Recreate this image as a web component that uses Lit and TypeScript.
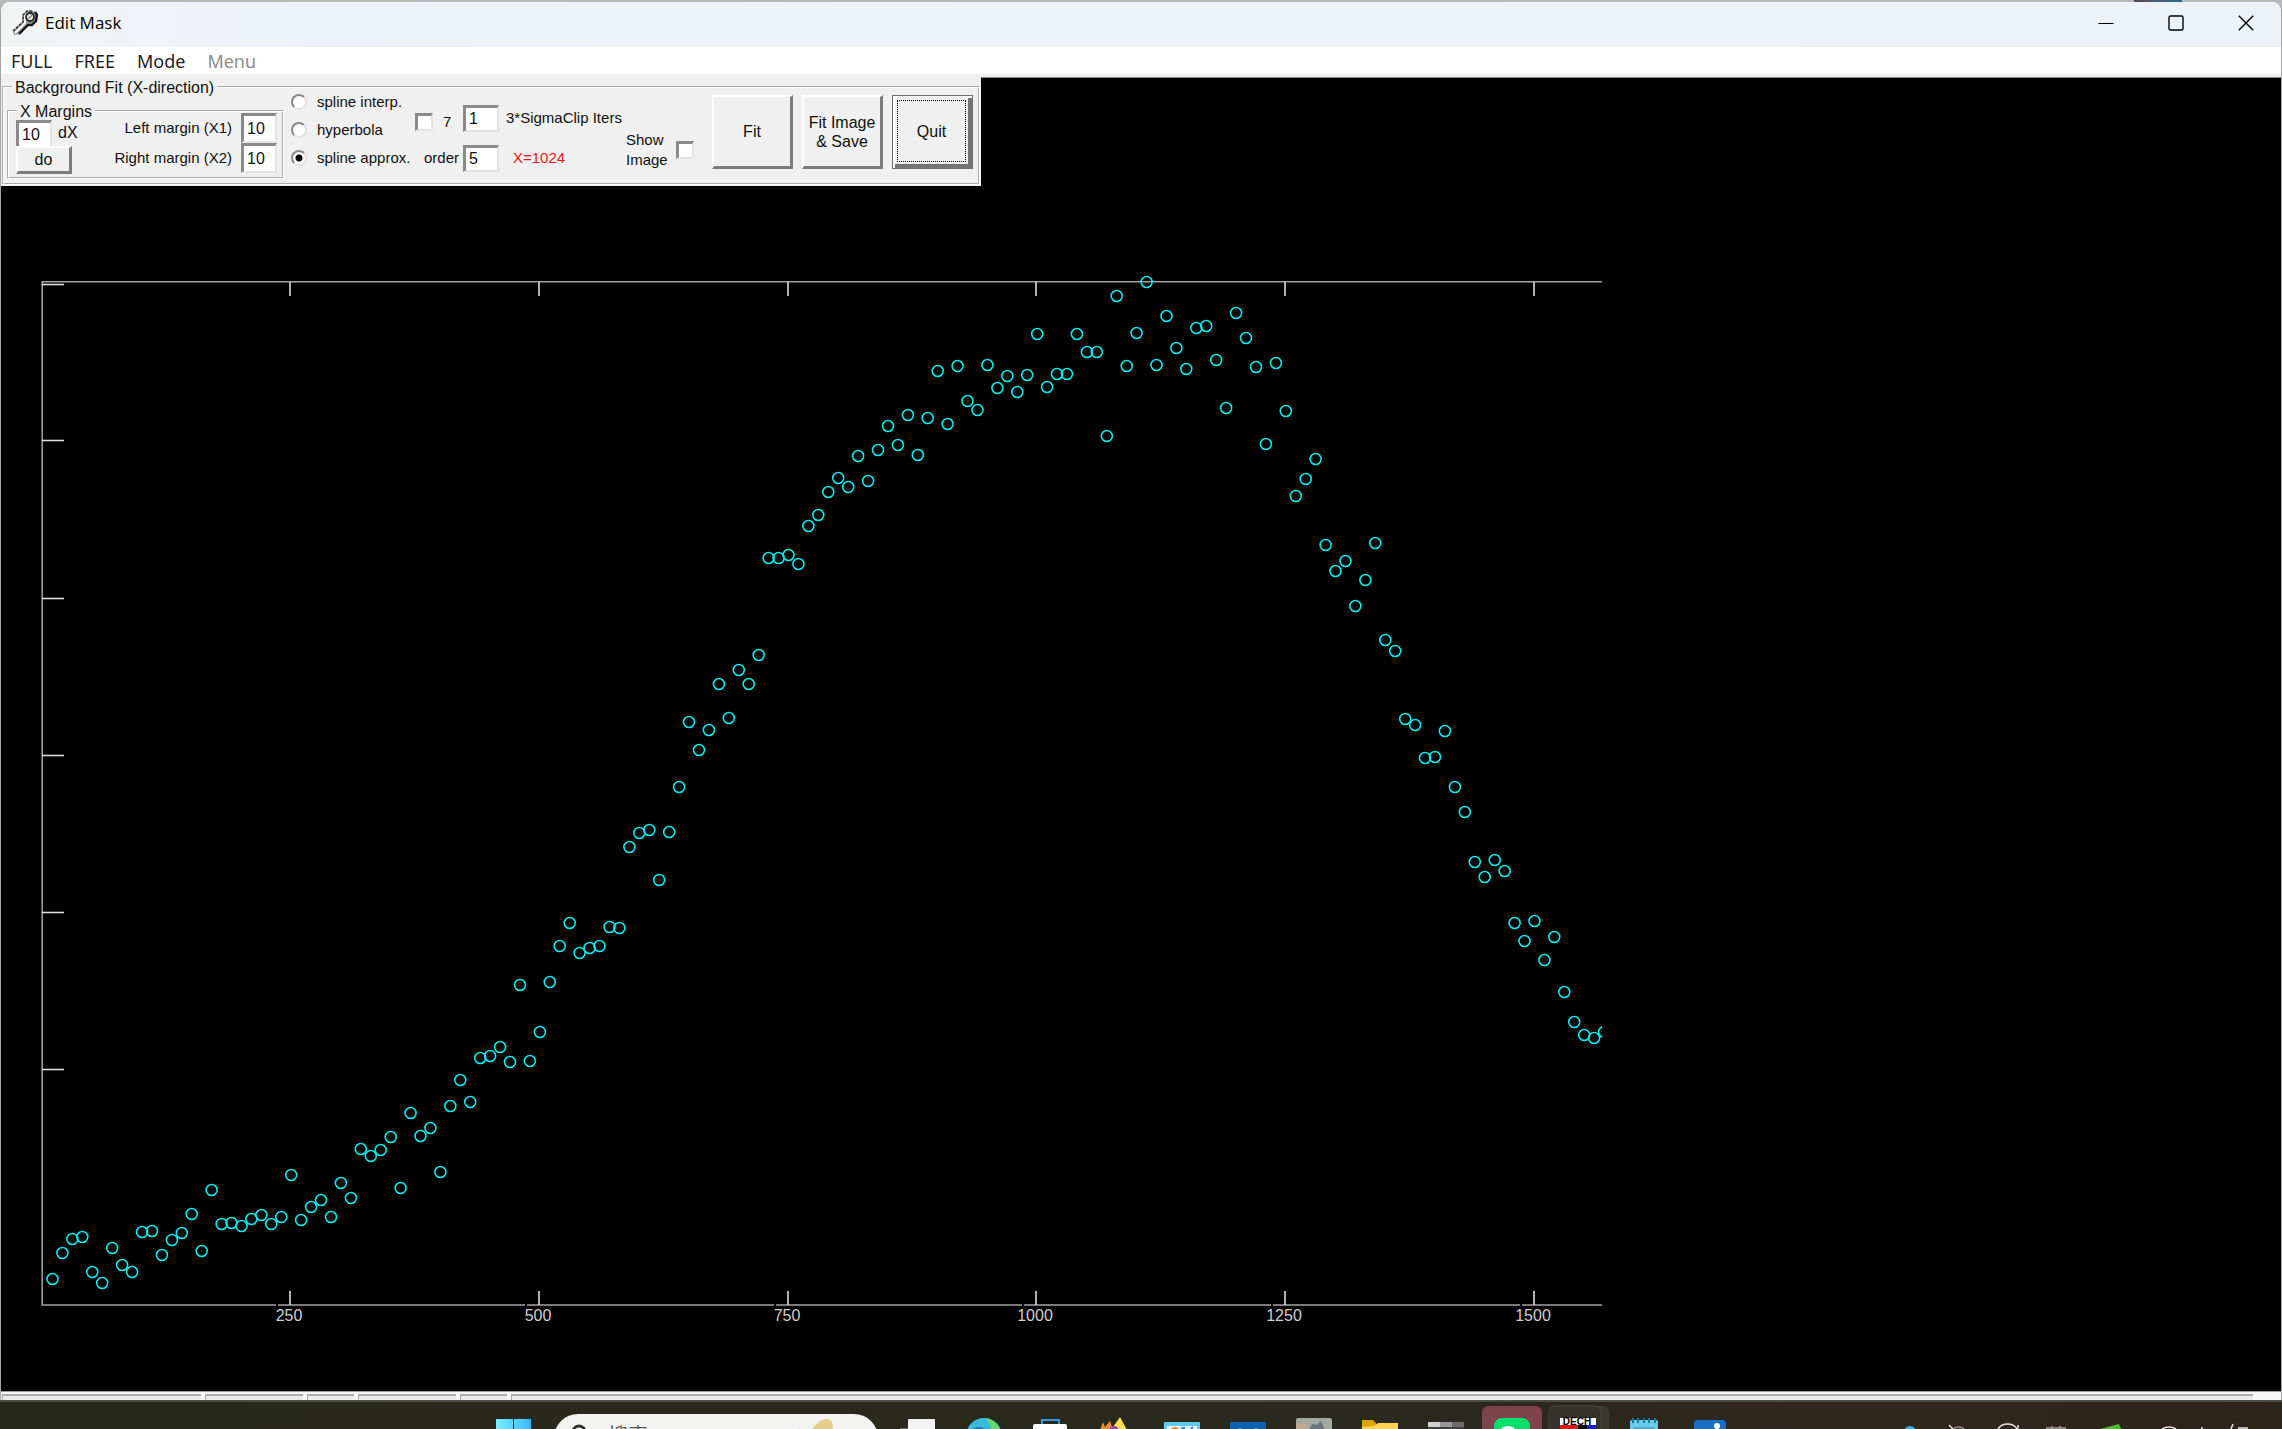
import { LitElement, html, svg, css } from "lit";
import { customElement } from "lit/decorators.js";

/** Background samples, one for every ten image columns (canvas y). */
const SAMPLES = [
  1279, 1253, 1239, 1237, 1272, 1283, 1248, 1265, 1272, 1232, 1231, 1255, 1240, 1233, 1214, 1251,
  1190, 1224, 1223, 1226, 1219, 1215, 1224, 1217, 1175, 1220, 1207, 1200, 1217, 1183, 1198, 1149,
  1156, 1150, 1137, 1188, 1113, 1136, 1128, 1172, 1106, 1080, 1102, 1058, 1056, 1047, 1062, 985,
  1061, 1032, 982, 946, 923, 953, 948, 946, 927, 928, 847, 833, 830, 880, 832, 787,
  722, 750, 730, 684, 718, 670, 684, 655, 558, 558, 555, 564, 526, 515, 492, 478,
  487, 456, 481, 450, 426, 445, 415, 455, 418, 371, 424, 366, 401, 410, 365, 388,
  376, 392, 375, 334, 387, 374, 374, 334, 352, 352, 436, 296, 366, 333, 282, 365,
  316, 348, 369, 328, 326, 360, 408, 313, 338, 367, 444, 363, 411, 496, 479, 459,
  545, 571, 561, 606, 580, 543, 640, 651, 719, 725, 758, 757, 731, 787, 812, 862,
  877, 860, 871, 923, 941, 921, 960, 937, 992, 1022, 1035, 1038, 1032,
];
const FIRST_X = 52.5;
const STEP_X = 9.946;

const X_TICKS = [
  { x: 290, label: "250" },
  { x: 539, label: "500" },
  { x: 788, label: "750" },
  { x: 1036, label: "1000" },
  { x: 1285, label: "1250" },
  { x: 1534, label: "1500" },
];
const Y_TICKS = [284, 440, 598, 755, 912, 1069];

@customElement("mask-plot")
export class MaskPlot extends LitElement {
  static styles = css`
    :host { display: block; background: #000; min-height: 0; }
    .canvas { display: block; width: 100%; height: 100%; }
    .axis { stroke: #a4a4a4; stroke-width: 1.5; fill: none; }
    .tick { stroke: #dedede; stroke-width: 1.6; }
    .gap { stroke: #000; stroke-width: 2; }
    .point { fill: none; stroke: #00ecec; stroke-width: 1.6; }
    .label { fill: #d0d0d0; font: 16px "Liberation Sans", Arial, sans-serif; text-anchor: middle; }
  `;

  render() {
    return html`
      <svg class="canvas" viewBox="1 186 2280 1205" preserveAspectRatio="xMinYMin meet" role="img" aria-label="Background profile">
        <defs><clipPath id="area"><rect x="30" y="200" width="1572" height="1120"></rect></clipPath></defs>
        <path class="axis" d="M1602 281.8H42.2V1305H1602"></path>
        ${Y_TICKS.map((y) => svg`<line class="tick" x1="42" x2="64" y1=${y + 0.5} y2=${y + 0.5}></line>`)}
        ${X_TICKS.map((t) => svg`
          <line class="tick" x1=${t.x} x2=${t.x} y1="282" y2="296"></line>
          <line class="tick" x1=${t.x} x2=${t.x} y1="1291" y2="1305"></line>
          <line class="gap" x1=${t.x - 14} x2=${t.x - 12} y1="1305" y2="1305"></line>
          <text class="label" x=${t.x - 1} y="1321">${t.label}</text>`)}
        <g clip-path="url(#area)">
          ${SAMPLES.map((y, i) => svg`<circle class="point" cx=${(FIRST_X + i * STEP_X).toFixed(1)} cy=${y} r="5.5"></circle>`)}
        </g>
      </svg>`;
  }
}

@customElement("fit-panel")
export class FitPanel extends LitElement {
  static styles = css`
    :host { display: flex; background: #f0f0f0; padding: 12px 1px 1px 1px; color: #111;
      font: 16px/20px "Liberation Sans", Arial, sans-serif; white-space: nowrap; }
    fieldset { box-sizing: border-box; margin: 0; padding: 0; border: 2px groove #fff; min-width: 0; display: flex; align-items: flex-start; }
    legend { height: 2px; line-height: 4px; padding: 0 3px; margin-left: 8px; }
    .outer { padding-right: 5px; height: 99px; }
    .margins { margin: 22px 0 0 3px; width: 277px; height: 69px; justify-content: space-between; }
    .step { display: grid; grid-template-columns: 36px auto; column-gap: 6px; padding: 8px 0 0 7px; }
    .step .field { height: 26px; border-bottom: 0; }
    .step .label { align-self: center; }
    .step .button { grid-column: 1 / 3; width: 56px; height: 28px; }
    .limits { display: grid; grid-template-columns: auto 36px; grid-auto-rows: 30px; column-gap: 9px; align-items: center; padding: 1px 5px 0 0; text-align: right; font-size: 15px; line-height: 24px; }
    .limits .field { height: 30px; font-size: 16px; }
    .field { box-sizing: border-box; width: 36px; height: 27px; margin: 0; padding: 0 0 0 3px; border-style: solid; border-width: 3px 2px 2px 3px;
      border-color: #8a8a8a #e4e4e4 #e4e4e4 #8a8a8a; background: #fff; color: #111; font: inherit; font-size: 16px; border-radius: 0; outline: none; }
    .button { box-sizing: border-box; margin: 0; padding: 0; border-style: solid; border-width: 2px 3px 3px 2px; border-color: #fff #7c7c7c #7c7c7c #fff;
      background: #f0f0f0; color: #111; font: inherit; line-height: 19px; }
    .kinds { width: 122px; margin-left: 7px; display: flex; flex-direction: column; font-size: 15px; }
    .kind { height: 28px; display: flex; align-items: center; gap: 10px; }
    .radio { appearance: none; box-sizing: border-box; flex: none; width: 16px; height: 16px; margin: 0; border: 2px solid; border-radius: 50%;
      border-color: #8a8a8a #e4e4e4 #e4e4e4 #8a8a8a; background: #fff; }
    .radio:checked { background: radial-gradient(circle, #000 3px, #fff 4px); }
    .check { appearance: none; box-sizing: border-box; flex: none; width: 18px; height: 18px; margin: 0; border-style: solid; border-width: 3px 2px 2px 3px;
      border-color: #8a8a8a #e4e4e4 #e4e4e4 #8a8a8a; background: #fff; }
    .options { width: 50px; padding-top: 16px; display: flex; flex-direction: column; font-size: 15px; }
    .option { height: 36px; display: flex; align-items: center; }
    .clip { padding-left: 2px; gap: 10px; }
    .order { justify-content: flex-end; padding-right: 4px; }
    .values { width: 163px; padding-top: 10px; font-size: 15px; }
    .value { height: 40px; display: flex; align-items: center; gap: 7px; }
    .size { color: #f81414; padding-left: 7px; }
    .show { padding-top: 42px; width: 68px; display: flex; align-items: center; justify-content: space-between; font-size: 15px; }
    .actions { display: flex; gap: 9px; padding: 7px 0 0 18px; }
    .action { width: 81px; height: 74px; }
    .default { border: 1px solid #6c6c6c; padding: 0 2px 2px 0; box-shadow: inset 2px 2px 0 #fff, inset -4px -4px 0 #747474; }
    .focus { display: flex; align-items: center; justify-content: center; box-sizing: border-box; width: 69px; height: 62px; margin: 0 auto; border: 1px dotted #000; }
  `;

  render() {
    return html`
      <fieldset class="outer">
        <legend>Background Fit (X-direction)</legend>
        <fieldset class="margins">
          <legend>X Margins</legend>
          <div class="step">
            <input class="field" id="dx" value="10" /><label class="label" for="dx">dX</label>
            <button class="button">do</button>
          </div>
          <div class="limits">
            <label for="x1">Left margin (X1)</label><input class="field" id="x1" value="10" />
            <label for="x2">Right margin (X2)</label><input class="field" id="x2" value="10" />
          </div>
        </fieldset>
        <div class="kinds">
          <label class="kind"><input class="radio" type="radio" name="kind" />spline interp.</label>
          <label class="kind"><input class="radio" type="radio" name="kind" />hyperbola</label>
          <label class="kind"><input class="radio" type="radio" name="kind" checked />spline approx.</label>
        </div>
        <div class="options">
          <label class="option clip"><input class="check" type="checkbox" />7</label>
          <label class="option order" for="order">order</label>
        </div>
        <div class="values">
          <div class="value"><input class="field" id="iters" value="1" /><label for="iters">3*SigmaClip Iters</label></div>
          <div class="value"><input class="field" id="order" value="5" /><span class="size">X=1024</span></div>
        </div>
        <label class="show"><span>Show<br />Image</span><input class="check" type="checkbox" /></label>
        <div class="actions">
          <button class="button action">Fit</button>
          <button class="button action">Fit Image<br />&amp; Save</button>
          <button class="button action default"><span class="focus">Quit</span></button>
        </div>
      </fieldset>`;
  }
}

/** Launcher icons; each slot is 66 wide with its centre at 33. */
const APPS = [
  { name: "Task view", art: svg`<rect x="15" y="26" width="24" height="10" fill="#77776f"/><rect x="23" y="17" width="27" height="20" rx="1" fill="#f4f4f4"/>` },
  { name: "Edge", art: svg`<circle cx="33" cy="34" r="18" fill="#35b9dc"/><path d="M35 16a18 18 0 0 1 15 15h-8z" fill="#63d66b"/><circle cx="28" cy="34" r="9" fill="#1378c0"/>` },
  { name: "Store", art: svg`<path d="M25 23v-5h17v5" fill="none" stroke="#2d9be8" stroke-width="2"/><rect x="16" y="22" width="34" height="16" rx="2" fill="#fff"/>` },
  { name: "Matlab", art: svg`<path d="M17 28l3-8 2 5 5-6 3 9z" fill="#f28b24"/><path d="M26 28l4-3 7-10 7 13z" fill="#ffe24a"/><circle cx="31" cy="29" r="5" fill="#9b3fd0"/>` },
  { name: "Viewer", art: svg`<rect x="15" y="20" width="36" height="14" rx="1" fill="#5ecdf2"/><rect x="18" y="24" width="30" height="10" fill="#e8f6fb"/><path d="M22 28a4 3 0 0 1 8 0z" fill="#f08a2c"/><path d="M31 28a4 5 0 0 1 5-3v3z" fill="#2f8fd0"/><path d="M41 28l3-3" stroke="#2f8fd0" stroke-width="2"/>` },
  { name: "Mail", art: svg`<rect x="15" y="20" width="36" height="14" rx="2" fill="#0c63b4"/><circle cx="25" cy="28" r="2" fill="#62b7f0"/><circle cx="41" cy="28" r="2" fill="#62b7f0"/>` },
  { name: "Photo", art: svg`<rect x="15" y="16" width="36" height="18" rx="2" fill="#a5aaa0"/><path d="M15 22h13l-5 6h-8z" fill="#c3a994"/><path d="M28 28l3-6 5 1 4-4 4 9z" fill="#687684"/>` },
  { name: "Files", art: svg`<path d="M15 18h11l3 3v7H15z" fill="#e0a30a"/><path d="M15 25l12-1 4-3h20v8H15z" fill="#ffd34f"/>` },
  { name: "Terminal", art: svg`<rect x="15" y="20" width="12" height="5" fill="#cfcfcf"/><rect x="27" y="20" width="12" height="5" fill="#989898"/><rect x="39" y="20" width="12" height="5" fill="#6a6a6a"/><rect x="15" y="25" width="36" height="4" fill="#404040"/>` },
  { name: "Messages", art: svg`<rect x="3" y="4" width="60" height="40" rx="6" fill="#7f444a"/><rect x="15" y="16" width="36" height="30" rx="8" fill="#07e06c"/><ellipse cx="29" cy="30" rx="8" ry="6" fill="#fff"/>` },
  { name: "Dech", art: svg`<rect x="6" y="4" width="58" height="40" rx="6" fill="#3a3a30"/><rect x="4" y="4" width="52" height="40" rx="6" fill="#33332a" stroke="#484840"/><rect x="15" y="16" width="36" height="7" fill="#fff"/><rect x="15" y="23" width="18" height="6" fill="#e81414"/><rect x="33" y="23" width="9" height="6" fill="#000"/><rect x="42" y="23" width="9" height="6" fill="#1420e0"/><text x="32" y="23" font-family="Liberation Sans, sans-serif" font-weight="700" font-size="10" text-anchor="middle" fill="#000">DECH</text>` },
  { name: "Notepad", art: svg`<rect x="19" y="18" width="28" height="20" rx="2" fill="#68cbe8"/><path d="M22 16v5M27 16v5M33 16v5M38 16v5M44 16v5" stroke="#19789c" stroke-width="2"/><path d="M23 26h20" stroke="#2b93b8"/>` },
  { name: "Chat", art: svg`<rect x="17" y="18" width="32" height="20" rx="4" fill="#186fc6"/><circle cx="40" cy="24" r="3" fill="#fff"/>` },
];

@customElement("task-bar")
export class TaskBar extends LitElement {
  static styles = css`
    :host { display: flex; align-items: flex-start; height: 27px; overflow: hidden; background: linear-gradient(90deg, #272918, #29291d 60%, #31261c 85%, #2b2418); }
    .slot { display: block; flex: none; margin: 0; padding: 0; border: 0; background: none; width: 66px; height: 27px; }
    .glyph { display: block; }
    .start { margin-left: 480px; }
    .search { flex: none; display: flex; box-sizing: border-box; width: 324px; height: 60px; margin: 12px 7px 0 8px; padding: 9px 30px 0 16px; border-radius: 24px; background: #f3f3f1; gap: 20px; }
    .query { flex: 1; min-width: 0; height: 24px; margin: 0; padding: 0; border: 0; background: none; outline: none; font: 20px/24px "Noto Sans CJK SC", sans-serif; }
    .query::placeholder { color: #555; opacity: 1; }
    .tray { margin-left: auto; }
  `;

  render() {
    return html`
      <button class="slot start" aria-label="Start">
        <svg class="glyph" width="66" height="27" viewBox="0 0 66 27"><defs><linearGradient id="w" x2="1"><stop stop-color="#78f0ff"/><stop offset="1" stop-color="#38b8fa"/></linearGradient></defs><path d="M16 17h17v10H16zM34 17h17v10H34z" fill="url(#w)"/></svg>
      </button>
      <label class="search">
        <svg class="glyph" width="18" height="18" viewBox="0 0 18 18" fill="none" stroke="#333" stroke-width="3"><circle cx="9" cy="9" r="6"/></svg>
        <input class="query" aria-label="搜索" placeholder="搜索" />
        <svg class="glyph" width="60" height="18" viewBox="0 0 60 18" overflow="visible"><ellipse cx="33" cy="9" rx="9" ry="15" transform="rotate(40 33 9)" fill="#e3cf88"/><path d="M11 5q5 2 3 9h-5z" fill="#c3cfe2"/><path d="M58 6l2 4 2 3h-6z" fill="#e8d23a"/></svg>
      </label>
      ${APPS.map((a) => html`<button class="slot" aria-label=${a.name}><svg class="glyph" width="66" height="27" viewBox="0 0 66 27">${a.art}</svg></button>`)}
      <svg class="glyph tray" width="382" height="27" viewBox="1900 0 382 27" fill="none" stroke="#e4e4e0" stroke-width="1.5">
        <circle cx="1910" cy="30" r="6" fill="#27b4f4" stroke="none"/>
        <path d="M1949 23l4 4" /><path d="M1953 27q6-4 11 0" stroke="#9a9a92" />
        <path d="M1998 27a11 10 0 0 1 19 0M2018 23v4" />
        <path d="M2046 26h20M2052 24v3M2060 24v3" stroke="#a0a098" />
        <path d="M2100 27l19-5 2 5z" fill="#43c31f" stroke="none" />
        <path d="M2162 27q7-4 14 0M2202 25v2M2233 22l-2 5M2238 26h10" />
      </svg>`;
  }
}

@customElement("app-root")
export class AppRoot extends LitElement {
  static styles = css`
    :host { display: flex; flex-direction: column; height: 100vh; background: #b8b8b8; font-family: "Noto Sans", "Open Sans", sans-serif; overflow: hidden; }
    .desktop { height: 2px; flex: none; display: flex; justify-content: flex-end; background: #b8b8b8; }
    .picture { width: 48px; margin-right: 100px; background: linear-gradient(90deg, #58444a, #4a6078, #266a94); }
    .window { flex: 1; min-height: 0; display: flex; flex-direction: column; border: 1px solid #a4a4a4; border-width: 0 1px; border-radius: 9px 9px 0 0; overflow: hidden; background: #f0f0f0; }
    .title { flex: none; box-sizing: border-box; height: 45px; display: flex; align-items: center; background: linear-gradient(90deg, #f2f4f4, #edf2fa 14%, #edf3f6 35%, #edf2f7); padding: 0 0 3px 11px; color: #000; }
    .name { margin: 0 auto 0 7px; font-size: 17px; font-weight: 400; line-height: 24px; font-family: "Open Sans", sans-serif; }
    .control { width: 70px; height: 42px; margin: 0; padding: 0; border: 0; background: none; display: flex; align-items: center; justify-content: center; }
    .menu { flex: none; height: 27px; display: flex; align-items: center; gap: 22px; background: #fff; padding-left: 10px; }
    .item { margin: 0; padding: 0; border: 0; background: none; color: #222; font: 18px/24px "Noto Sans", sans-serif; }
    .item:disabled { color: #8d8d8d; }
    .work { flex: none; display: flex; background: #000; }
    .rest { flex: 1; height: 3px; background: #f0f0f0; border-bottom: 1px solid #8a8a8a; }
    mask-plot { flex: 1; }
    .status { flex: none; height: 9px; box-sizing: border-box; display: flex; gap: 4px; padding: 2px 28px 0 1px; border-top: 1px solid #9a9a9a; background: #f6f6f6; }
    .cell { box-sizing: border-box; border-top: 2px solid #acacac; border-left: 1px solid #acacac; background: #ececec; }
    .narrow { width: 47px; }
    .medium { width: 98px; }
    .wide { width: 199px; }
    .fill { flex: 1; }
    .edge { flex: none; height: 2px; background: #4c4e46; }
    task-bar { flex: none; }
  `;

  render() {
    return html`
      <div class="desktop"><span class="picture"></span></div>
      <section class="window">
        <header class="title">
          <svg width="26" height="26" viewBox="0 0 26 26">
            <path d="M1 21L11 12L11 5L15 1L22 1L25 5L24 11L20 15L16 15L8 24L2 25Z" fill="#9a9a9a"/>
            <path d="M1 21L11 12V5L15 1H21" fill="none" stroke="#333" stroke-width="1.6" stroke-dasharray="3 1"/>
            <path d="M3 23L13 13L13 6L16 3" fill="none" stroke="#fff" stroke-width="2"/>
            <path d="M23 2L25 5L24 11L20 15H16L7 24" fill="none" stroke="#151515" stroke-width="2.4"/>
            <circle cx="18" cy="7" r="4" fill="#e8e8e8" stroke="#222" stroke-width="1.8"/>
            <path d="M16 9L20 5" stroke="#888" stroke-width="1.5"/>
          </svg>
          <h1 class="name">Edit Mask</h1>
          <button class="control" aria-label="Minimize"><svg width="16" height="16" viewBox="0 0 16 16"><path d="M0.500 8.500H15.500" stroke="#000" stroke-width="1.2"/></svg></button>
          <button class="control" aria-label="Maximize"><svg width="16" height="16" viewBox="0 0 16 16"><rect x="1" y="1" width="14" height="14" rx="1.500" fill="none" stroke="#000" stroke-width="1.4"/></svg></button>
          <button class="control" aria-label="Close"><svg width="16" height="16" viewBox="0 0 16 16"><path d="M0.800 0.800L15.200 15.200M15.200 0.800L0.800 15.200" stroke="#000" stroke-width="1.4"/></svg></button>
        </header>
        <nav class="menu">
          <button class="item">FULL</button><button class="item">FREE</button><button class="item">Mode</button><button class="item" disabled>Menu</button>
        </nav>
        <div class="work"><fit-panel></fit-panel><div class="rest"></div></div>
        <mask-plot></mask-plot>
        <footer class="status">
          <span class="cell wide"></span><span class="cell medium"></span><span class="cell narrow"></span>
          <span class="cell medium"></span><span class="cell narrow"></span><span class="cell fill"></span>
        </footer>
      </section>
      <div class="edge"></div>
      <task-bar></task-bar>`;
  }
}
